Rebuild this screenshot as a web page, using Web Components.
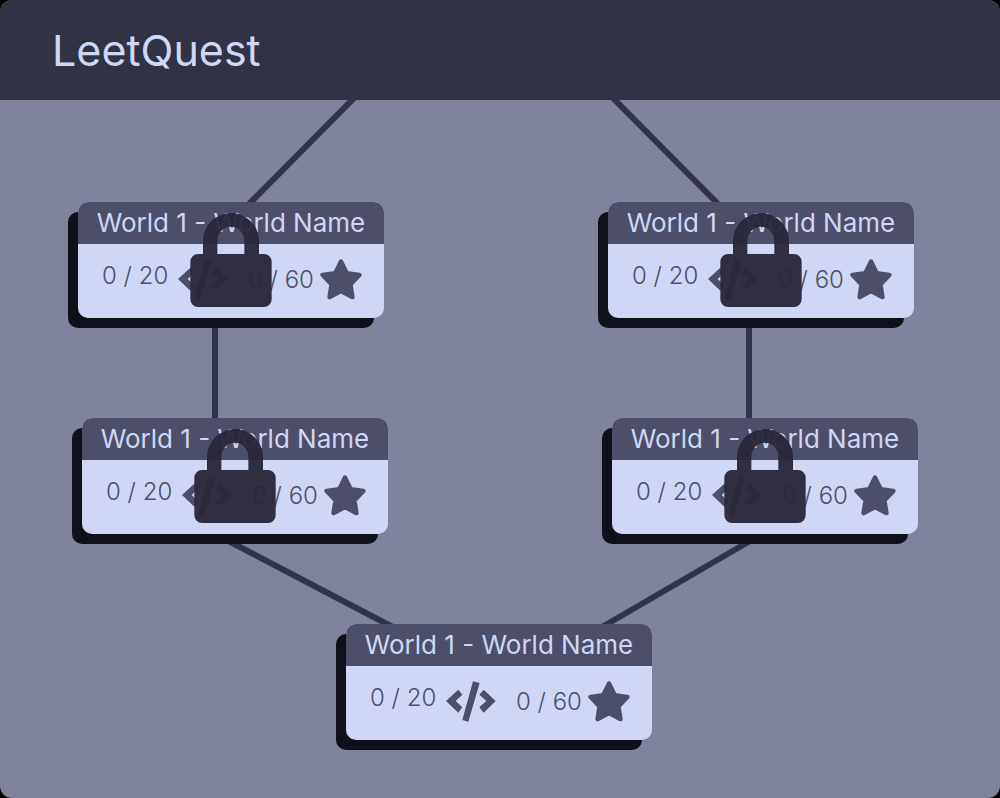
<!DOCTYPE html>
<html lang="en">
<head>
<meta charset="utf-8">
<meta name="viewport" content="width=device-width, initial-scale=1">
<title>LeetQuest</title>
<style>
  :root {
    --bar: #313244;
    --line: #313349;
    --canvas: #7f849c;
    --panel: #4d4f69;
    --paper: #cfd7f4;
    --shadow: #0e1119;
    --lock: #292639;
  }
  body {
    margin: 0;
    background: #000;
    color: var(--paper);
    font-family: Inter, "Open Sans", sans-serif;
  }
</style>
</head>
<body>
<quest-app>
  <quest-header slot="header">LeetQuest</quest-header>
  <quest-map>
    <world-card locked style="--x: 23.1%; --y: 102px" solved="0 / 20" stars="0 / 60">World 1 - World Name</world-card>
    <world-card locked style="--x: 76.1%; --y: 102px" solved="0 / 20" stars="0 / 60">World 1 - World Name</world-card>
    <world-card locked style="--x: 23.5%; --y: 318px" solved="0 / 20" stars="0 / 60">World 1 - World Name</world-card>
    <world-card locked style="--x: 76.5%; --y: 318px" solved="0 / 20" stars="0 / 60">World 1 - World Name</world-card>
    <world-card style="--x: 49.9%; --y: 524px" solved="0 / 20" stars="0 / 60">World 1 - World Name</world-card>
  </quest-map>
</quest-app>

<script>
  class QuestElement extends HTMLElement {
    constructor() {
      super();
      this.attachShadow({ mode: "open" }).innerHTML = this.constructor.markup;
    }
  }

  customElements.define("quest-app", class extends QuestElement {
    static markup = `
      <style>
        :host {
          display: flex;
          flex-direction: column;
          min-height: 100vh;
          border-radius: 12px;
          overflow: hidden;
          background: var(--canvas);
        }
        main { flex: 1; display: flex; }
      </style>
      <slot name="header"></slot>
      <main><slot></slot></main>`;
  });

  customElements.define("quest-header", class extends QuestElement {
    static markup = `
      <style>
        :host { display: block; background: var(--bar); }
        header { display: flex; align-items: center; height: 100px; padding: 0 52px; }
        h1 { margin: 0; font-size: 43px; line-height: 48px; font-weight: 400; }
      </style>
      <header><h1><slot></slot></h1></header>`;
  });

  customElements.define("quest-map", class extends QuestElement {
    static markup = `
      <style>
        :host { display: block; flex: 1; position: relative; min-height: 698px; overflow: hidden; }
        svg { position: absolute; inset: 0; width: 100%; height: 100%; }
        line { stroke: var(--line); stroke-width: 6; }
      </style>
      <svg aria-hidden="true">
        <line x1="36.2%" y1="-10" x2="24.1%" y2="112"/>
        <line x1="60.5%" y1="-10" x2="72.6%" y2="112"/>
        <line x1="21.5%" y1="210" x2="21.5%" y2="330"/>
        <line x1="74.9%" y1="210" x2="74.9%" y2="330"/>
        <line x1="21.5%" y1="434" x2="40.6%" y2="534"/>
        <line x1="76.2%" y1="434" x2="59%" y2="534"/>
      </svg>
      <slot></slot>`;
  });

  customElements.define("world-card", class extends QuestElement {
    static markup = `
      <style>
        :host {
          display: block;
          position: absolute;
          left: var(--x);
          top: var(--y);
          width: 306px;
          margin-left: -153px;
        }
        article {
          border-radius: 10px;
          background: var(--paper);
          box-shadow: -10px 10px 0 var(--shadow);
        }
        h2 {
          margin: 0;
          border-radius: 10px 10px 0 0;
          background: var(--panel);
          font-size: 26px;
          line-height: 42px;
          font-weight: 400;
          text-align: center;
          white-space: nowrap;
        }
        .stats {
          display: grid;
          grid-template-columns: 76px 70px 72px 42px;
          align-items: start;
          height: 59px;
          padding: 15px 22px 0 24px;
          color: var(--panel);
          font-size: 24px;
          line-height: 34px;
          font-weight: 300;
          white-space: nowrap;
        }
        .stars { padding-top: 4px; }
        .stats svg { display: block; fill: currentColor; stroke: currentColor; }
        .code { width: 50px; height: 41px; stroke: none !important; }
        .star { width: 42px; height: 41px; }
        .lock { display: none; }
        :host([locked]) .lock {
          display: block;
          position: absolute;
          left: 112px;
          top: 11px;
          width: 82px;
          height: 94px;
          fill: var(--lock);
          opacity: .95;
        }
      </style>
      <article>
        <h2><slot></slot></h2>
        <div class="stats">
          <span class="solved"></span>
          <svg class="code" viewBox="0 0 150 123" aria-hidden="true">
            <path d="M0 60 37 26 49 41 29 60 49 79 37 95Z M81 1 101 6 67 122 49 117Z M113 26 149 60 113 95 100 79 121 60 100 41Z"/>
          </svg>
          <span class="stars"></span>
          <svg class="star" viewBox="0 0 126 123" aria-hidden="true">
            <path d="M63 8 80 43 118 48 91 76 97 114 63 96 29 114 35 76 8 48 46 43Z" stroke-width="14" stroke-linejoin="round"/>
          </svg>
        </div>
      </article>
      <svg class="lock" viewBox="0 0 246 282" role="img" aria-label="Locked">
        <path d="M24 123H39V84A84 84 0 0 1 207 84V123H222A23 23 0 0 1 245 146V259A23 23 0 0 1 222 282H24A23 23 0 0 1 1 259V146A23 23 0 0 1 24 123ZM82 123H163V84A40 42 0 0 0 82 84Z"/>
      </svg>`;

    connectedCallback() {
      for (const name of ["solved", "stars"]) {
        this.shadowRoot.querySelector("." + name).textContent = this.getAttribute(name);
      }
    }
  });
</script>
</body>
</html>
